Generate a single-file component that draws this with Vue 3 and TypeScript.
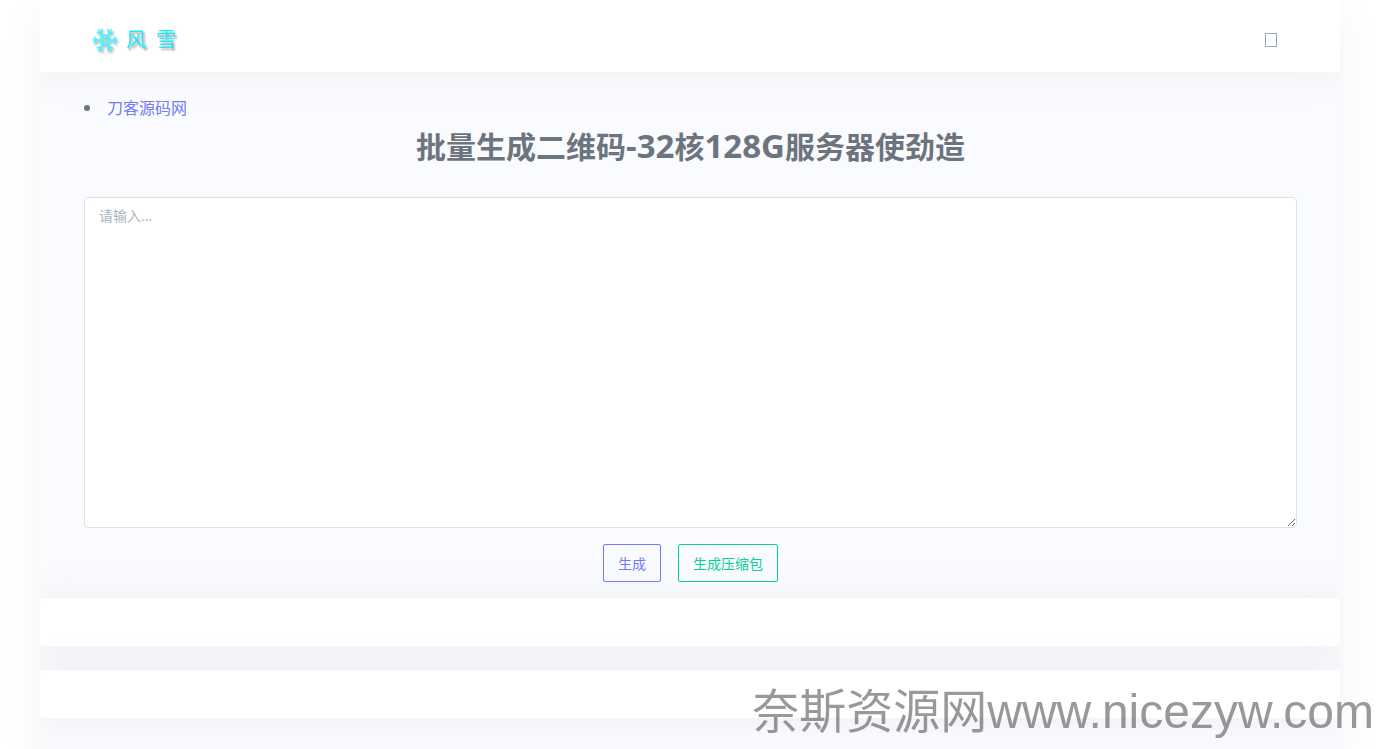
<script setup lang="ts">
import { ref } from 'vue'

const content = ref('')
const flakeArms = [30, 90, 150, 210, 270, 330]
</script>

<template>
  <div class="page">
    <div class="wrapper">
      <div class="inner">
        <header class="topbar">
          <a class="brand" href="#" aria-label="风雪">
            <svg class="flake" viewBox="-13 -13 26 26" aria-hidden="true">
              <g v-for="angle in flakeArms" :key="angle" :transform="`rotate(${angle})`">
                <path d="M0 -1V-12.5M-3.2 -11L0 -7.8L3.2 -11M-2.6 -4.5H2.6" />
              </g>
            </svg>
            <span>风</span>
            <span>雪</span>
          </a>
          <button class="menu" type="button" aria-label="菜单"><span class="glyph"></span></button>
        </header>

        <main class="content">
          <ul class="links">
            <li><a href="#">刀客源码网</a></li>
          </ul>
          <h1>批量生成二维码<span class="latin">-32</span>核<span class="latin">128G</span>服务器使劲造</h1>
          <textarea v-model="content" aria-label="请输入" placeholder="请输入..."></textarea>
          <div class="actions">
            <button class="btn primary" type="button">生成</button>
            <button class="btn success" type="button">生成压缩包</button>
          </div>
        </main>

        <section class="card"></section>
        <section class="card"></section>
      </div>
    </div>
    <div class="watermark"><span class="site">奈斯资源网</span><span>www.nicezyw.com</span></div>
  </div>
</template>

<style>
body {
  margin: 0;
  background: #fff;
  overflow: hidden;
}
</style>

<style scoped>
.page {
  box-sizing: border-box;
  min-height: 100vh;
  padding-right: 5px;
  display: flex;
  justify-content: center;
  color: #6c757d;
  font-family: "Open Sans", "Noto Sans CJK SC", sans-serif;
}
.wrapper {
  display: flex;
  width: calc(100% - 80px);
  max-width: 1300px;
  background: #fafbfe;
  box-shadow: 0 16px 35px 0 rgba(150, 155, 155, 0.12);
}
.inner {
  flex: 1;
  overflow: hidden;
}
.topbar {
  display: flex;
  align-items: center;
  justify-content: space-between;
  height: 72px;
  padding: 0 63px 0 52px;
  background: #fff;
  box-shadow: 0 0 35px 0 rgba(154, 161, 171, 0.15);
}
.brand {
  display: flex;
  align-items: center;
  gap: 10px;
  margin-top: 7px;
  color: #1cecfa;
  font-size: 20px;
  line-height: 28px;
  text-decoration: none;
  text-shadow: 2px 2px 2px rgba(0, 0, 0, 0.35);
}
.flake {
  width: 26px;
  height: 26px;
  margin-right: -2px;
  fill: none;
  stroke: #4cf3ff;
  stroke-width: 1.7;
  filter: drop-shadow(1px 2px 1px rgba(0, 0, 0, 0.3));
}
.menu {
  margin-top: 8px;
  padding: 0;
  border: 0;
  background: none;
}
.glyph {
  display: block;
  box-sizing: border-box;
  width: 12px;
  height: 14px;
  border: 1px solid #98a6ad;
}
.content {
  padding: 24px 43px 16px 44px;
}
.links {
  margin: 0;
  padding: 0;
  list-style: none;
  font-size: 16px;
  line-height: 24px;
}
.links li {
  display: flex;
  align-items: center;
  gap: 17px;
}
.links li::before {
  content: "";
  width: 6px;
  height: 6px;
  border-radius: 50%;
  background: #6c757d;
}
.links a {
  color: #727cf5;
  text-decoration: none;
}
h1 {
  margin: 9px 0 33px;
  font-size: 30px;
  font-weight: 700;
  line-height: 35px;
  text-align: center;
}
.latin {
  font-size: 33px;
  line-height: 30px;
}
textarea {
  display: block;
  box-sizing: border-box;
  width: 100%;
  height: 331px;
  padding: 8px 14px;
  border: 1px solid #dee2e6;
  border-radius: 4px;
  background: #fff;
  color: #6c757d;
  font-family: inherit;
  font-size: 14px;
  line-height: 20px;
  outline: none;
  resize: both;
}
textarea::placeholder {
  color: #a9b4ba;
}
.actions {
  display: flex;
  justify-content: center;
  gap: 17px;
  margin-top: 16px;
}
.btn {
  padding: 9px 14px 7px;
  border: 1px solid currentColor;
  border-radius: 2px;
  background: transparent;
  font-family: inherit;
  font-size: 14px;
  line-height: 20px;
}
.primary {
  color: #727cf5;
}
.success {
  color: #0acf97;
}
.card {
  height: 48px;
  margin-bottom: 24px;
  border-radius: 4px;
  background: #fff;
  box-shadow: 0 0 35px 0 rgba(154, 161, 171, 0.15);
}
.watermark {
  position: fixed;
  right: 11px;
  bottom: 8px;
  display: flex;
  align-items: baseline;
  color: rgba(80, 80, 80, 0.58);
  font-family: "Liberation Sans", "Noto Sans CJK SC", sans-serif;
  font-size: 48px;
  line-height: 58px;
  white-space: nowrap;
  pointer-events: none;
}
.site {
  font-size: 47px;
}
</style>
